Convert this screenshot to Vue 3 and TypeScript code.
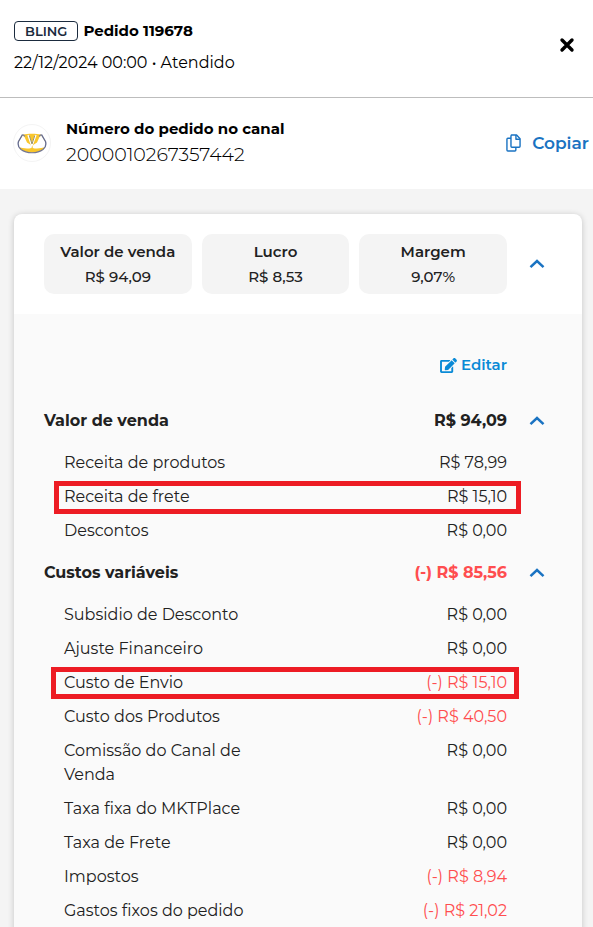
<script setup lang="ts">
import { ref } from 'vue'

interface Item {
  label: string
  value: string
  negative?: boolean
  mark?: 'revenue' | 'cost'
}

interface Section {
  title: string
  total: string
  negative?: boolean
  open: boolean
  items: Item[]
}

const summary = [
  { label: 'Valor de venda', value: 'R$ 94,09' },
  { label: 'Lucro', value: 'R$ 8,53' },
  { label: 'Margem', value: '9,07%' },
]

const expanded = ref(true)

const sections = ref<Section[]>([
  {
    title: 'Valor de venda',
    total: 'R$ 94,09',
    open: true,
    items: [
      { label: 'Receita de produtos', value: 'R$ 78,99' },
      { label: 'Receita de frete', value: 'R$ 15,10', mark: 'revenue' },
      { label: 'Descontos', value: 'R$ 0,00' },
    ],
  },
  {
    title: 'Custos variáveis',
    total: '(-) R$ 85,56',
    negative: true,
    open: true,
    items: [
      { label: 'Subsidio de Desconto', value: 'R$ 0,00' },
      { label: 'Ajuste Financeiro', value: 'R$ 0,00' },
      { label: 'Custo de Envio', value: '(-) R$ 15,10', negative: true, mark: 'cost' },
      { label: 'Custo dos Produtos', value: '(-) R$ 40,50', negative: true },
      { label: 'Comissão do Canal de Venda', value: 'R$ 0,00' },
      { label: 'Taxa fixa do MKTPlace', value: 'R$ 0,00' },
      { label: 'Taxa de Frete', value: 'R$ 0,00' },
      { label: 'Impostos', value: '(-) R$ 8,94', negative: true },
      { label: 'Gastos fixos do pedido', value: '(-) R$ 21,02', negative: true },
    ],
  },
])
</script>

<template>
  <div class="panel">
    <header class="header">
      <div class="heading">
        <div class="title-row">
          <span class="badge">BLING</span>
          <h1 class="title">Pedido 119678</h1>
        </div>
        <p class="date">22/12/2024 00:00 • Atendido</p>
      </div>
      <button class="close" type="button" aria-label="Fechar">
        <svg width="16" height="16" viewBox="0 0 16 16">
          <path d="M3 3l10 10M13 3L3 13" fill="none" stroke="#000" stroke-width="3.4" stroke-linecap="round" />
        </svg>
      </button>
    </header>

    <section class="channel">
      <span class="avatar">
        <svg width="30" height="22" viewBox="0 0 30 22">
          <path d="M6 2.500C11 1.500 19 1.500 24 2.500L28.500 9C30.500 16.500 24 20.800 15 20.800S-.5 16.500 1.500 9Z" fill="#f9c62c" />
          <path d="M1.300 10.500 5.500 3.500 7.500 5 10 10.500 13.800 13 14.300 16C9.500 17.200 5 16 1.300 15Z" fill="#fff" />
          <path d="M28.700 10.500 24.500 3.500 22.500 5 20 10.500 16.200 13 15.700 16C20.500 17.200 25 16 28.700 15Z" fill="#fff" />
          <path d="M11.200 3 14.800 13.500 18.800 3" fill="none" stroke="#fff" stroke-width="1.800" />
          <path d="M12.300 3.500 15 12 17.800 3.500" fill="none" stroke="#9b936f" stroke-width="1" />
          <path d="M5.500 2.600 1.500 9.500C.5 13 1.500 15.500 4 17.500M24.500 2.600 28.500 9.500C29.500 13 28.500 15.500 26 17.500" fill="none" stroke="#656c91" stroke-width="1.300" />
          <path d="M5.500 2.600 8 4.300M24.500 2.600 22 4.300" stroke="#7b82a3" stroke-width="1.200" />
          <path d="M4 17.500C9.500 21.800 20.500 21.800 26 17.500" fill="none" stroke="#737795" stroke-width="1.200" />
        </svg>
      </span>
      <div class="channel-text">
        <h2 class="channel-title">Número do pedido no canal</h2>
        <p class="channel-number">2000010267357442</p>
      </div>
      <button class="copy" type="button">
        <svg width="15" height="18" viewBox="0 0 16 18" preserveAspectRatio="none" fill="none" stroke="currentColor" stroke-width="1.5" stroke-linejoin="round">
          <path d="M5.800 1H11.300L15 4.700V12.200Q15 13.200 14 13.200H6.300Q5.300 13.200 5.300 12.200V2Q5.300 1 6.300 1Z" />
          <path d="M10.600 1V5.300H15" />
          <path d="M5.300 4.300H2Q1 4.300 1 5.300V16Q1 17 2 17H9.500Q10.500 17 10.500 16V13.200" />
        </svg>
        Copiar
      </button>
    </section>

    <main class="content">
      <article class="card">
        <div class="summary">
          <dl class="stats">
            <div v-for="stat in summary" :key="stat.label" class="stat">
              <dt>{{ stat.label }}</dt>
              <dd>{{ stat.value }}</dd>
            </div>
          </dl>
          <button class="toggle" type="button" aria-label="Resumo" :aria-expanded="expanded" @click="expanded = !expanded">
            <svg :class="{ flipped: !expanded }" width="16" height="10" viewBox="0 0 16 10">
              <path d="M1.500 8.200 8 2l6.500 6.200" />
            </svg>
          </button>
        </div>

        <div v-if="expanded" class="details">
          <div class="actions">
            <button class="edit" type="button">
              <svg width="17" height="15" viewBox="0 0 576 512" fill="currentColor">
                <path d="M402.600 83.200l90.200 90.200c3.800 3.800 3.800 10 0 13.800L274.400 405.600l-92.800 10.300c-12.400 1.400-22.900-9.100-21.500-21.500l10.300-92.800L388.800 83.200c3.800-3.800 10-3.800 13.800 0zm162-22.900l-48.800-48.800c-15.200-15.200-39.900-15.200-55.200 0l-35.400 35.400c-3.800 3.800-3.800 10 0 13.800l90.200 90.200c3.800 3.800 10 3.800 13.800 0l35.400-35.400c15.200-15.300 15.200-40 0-55.200zM384 346.200V448H64V128h229.800c3.200 0 6.200-1.300 8.500-3.500l40-40c7.600-7.600 2.200-20.500-8.500-20.500H48C21.500 64 0 85.500 0 112v352c0 26.500 21.500 48 48 48h352c26.500 0 48-21.500 48-48V306.200c0-10.700-12.900-16-20.500-8.500l-40 40c-2.200 2.300-3.500 5.300-3.500 8.500z" />
              </svg>
              Editar
            </button>
          </div>

          <section v-for="section in sections" :key="section.title" class="section">
            <div class="section-head">
              <h3>{{ section.title }}</h3>
              <strong :class="{ negative: section.negative }">{{ section.total }}</strong>
              <button class="toggle" type="button" :aria-label="section.title" :aria-expanded="section.open" @click="section.open = !section.open">
                <svg :class="{ flipped: !section.open }" width="16" height="10" viewBox="0 0 16 10">
                  <path d="M1.500 8.200 8 2l6.500 6.200" />
                </svg>
              </button>
            </div>
            <dl v-if="section.open" class="items">
              <div v-for="item in section.items" :key="item.label" class="item" :class="item.mark && ['marked', item.mark]">
                <dt>{{ item.label }}</dt>
                <dd :class="{ negative: item.negative }">{{ item.value }}</dd>
              </div>
            </dl>
          </section>
        </div>
      </article>
    </main>
  </div>
</template>

<style>
body {
  margin: 0;
  background: #f4f4f4;
}
</style>

<style scoped>
.panel {
  font-family: Montserrat, Inter, "Open Sans", sans-serif;
  font-size: 16px;
  line-height: 24px;
  color: #212121;
}

h1, h2, h3, p, dl, dt, dd {
  margin: 0;
}

button {
  display: flex;
  align-items: center;
  padding: 0;
  border: 0;
  background: none;
  font: inherit;
  cursor: pointer;
}

.header {
  display: flex;
  align-items: center;
  justify-content: space-between;
  padding: 19px 18px 22px 14px;
  border-bottom: 1px solid #bdbdbd;
  background: #fff;
  color: #000;
}

.close {
  align-self: flex-start;
  padding-top: 18px;
}

.heading {
  display: flex;
  flex-direction: column;
  gap: 8px;
}

.title-row {
  display: flex;
  align-items: center;
  gap: 5px;
}

.badge {
  padding: 0 10px;
  border: 1px solid #1b2b3e;
  border-radius: 4px;
  color: #1b2b3e;
  font-size: 13px;
  font-weight: 600;
  line-height: 18px;
}

.title, .channel-title {
  font-size: 15px;
  font-weight: 700;
  line-height: 24px;
}

.date {
  font-size: 16px;
  font-weight: 400;
}

.channel {
  display: flex;
  align-items: center;
  padding: 19px 4px 20px 13px;
  background: #fff;
  color: #000;
}

.avatar {
  display: flex;
  align-items: center;
  justify-content: center;
  box-sizing: border-box;
  width: 38px;
  height: 38px;
  margin-right: 15px;
  border: 1px solid #f4f4f4;
  border-radius: 50%;
}

.channel-text {
  flex: 1;
}

.channel-number {
  font-size: 19px;
  font-weight: 300;
  line-height: 28px;
}

.copy {
  gap: 11px;
  color: #1a73c2;
  font-size: 17px;
  font-weight: 600;
}

.content {
  padding: 25px 11px 0 14px;
}

.card {
  overflow: hidden;
  border-radius: 8px;
  background: #fff;
  box-shadow: 0 1px 6px rgba(0, 0, 0, 0.2);
}

.summary {
  display: flex;
  align-items: center;
  gap: 15px;
  padding: 20px 30px;
}

.stats {
  display: grid;
  flex: 1;
  grid-template-columns: repeat(3, 1fr);
  gap: 10px;
}

.stat {
  padding: 5px 0;
  border-radius: 10px;
  background: #f4f4f4;
  text-align: center;
  font-size: 15px;
  line-height: 25px;
}

.stat dt {
  font-weight: 600;
}

.stat dd {
  font-weight: 500;
}

.toggle {
  justify-content: center;
  width: 30px;
  height: 24px;
}

.toggle path {
  fill: none;
  stroke: #1a73c2;
  stroke-width: 2.5;
}

.flipped {
  transform: rotate(180deg);
}

.details {
  display: flex;
  flex-direction: column;
  gap: 18px;
  padding: 39px 30px 18px;
  background: #fafafa;
}

.actions {
  display: flex;
  justify-content: flex-end;
  padding: 0 45px 14px 0;
}

.edit {
  gap: 4px;
  color: #0a8ad6;
  font-size: 15px;
  font-weight: 600;
}

.section {
  display: flex;
  flex-direction: column;
  gap: 18px;
}

.section-head {
  display: flex;
  align-items: center;
}

.section-head h3 {
  flex: 1;
  font-size: 16px;
  font-weight: 700;
}

.section-head .toggle {
  margin-left: 15px;
}

.items {
  display: flex;
  flex-direction: column;
  gap: 10px;
  padding: 0 45px 0 20px;
  font-weight: 400;
}

.item {
  position: relative;
  display: flex;
  justify-content: space-between;
}

.item dt {
  flex: 0 1 45%;
}

.negative {
  color: #ff4d4f;
}

.marked::after {
  position: absolute;
  inset: -4px -14px -5px -10px;
  border: 5px solid #ed1c24;
  content: "";
}

.marked.cost::after {
  inset: -4px -12px -4px -13px;
}
</style>
